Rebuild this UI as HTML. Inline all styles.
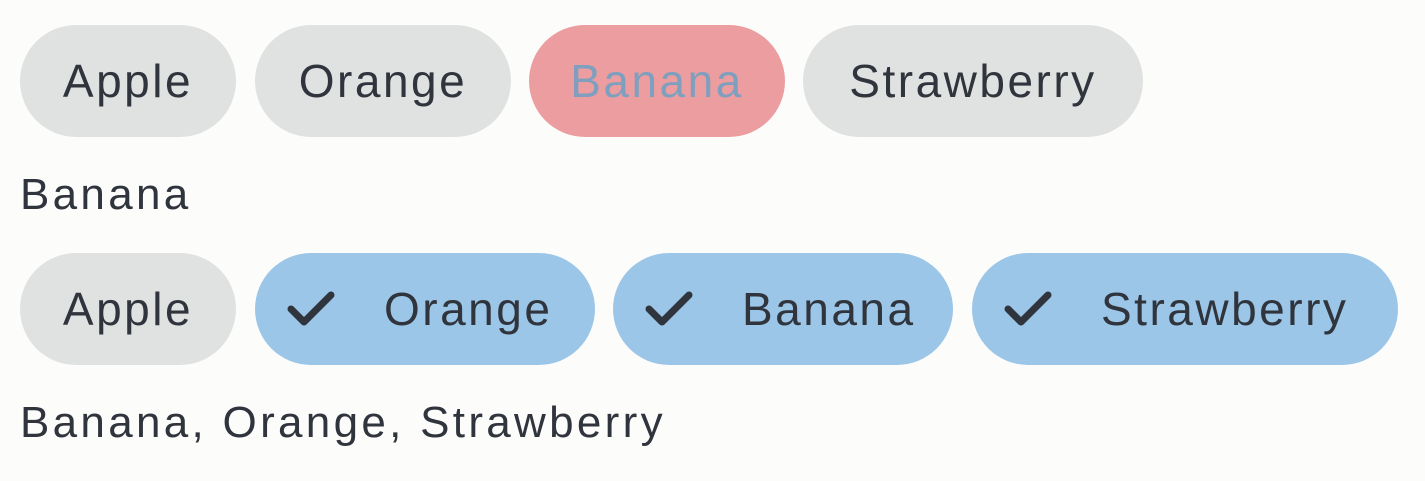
<!DOCTYPE html>
<html><head><style>
html,body{margin:0;padding:0;background:#fcfcfb;width:1425px;height:481px;overflow:hidden;font-family:"Liberation Sans",sans-serif;color:#30343c}
.c{position:absolute;height:112px;border-radius:56px;background:#e0e1e1;display:flex;align-items:center;justify-content:center;font-size:46px;box-sizing:border-box;letter-spacing:2.5px}
.b{background:#9bc6e8;justify-content:flex-start}
.b svg{margin-left:32px;margin-right:49px}
.l{position:absolute;font-size:44px;left:20px;letter-spacing:3.3px}
</style></head><body>
<div class="c" style="left:20px;top:25px;width:216px">Apple</div>
<div class="c" style="left:255px;top:25px;width:256px">Orange</div>
<div class="c" style="left:529px;top:25px;width:256px;background:#ec9d9f;color:#7f9fbf">Banana</div>
<div class="c" style="left:803px;top:25px;width:340px">Strawberry</div>
<div class="l" style="top:170px">Banana</div>
<div class="c" style="left:20px;top:253px;width:216px">Apple</div>
<div class="c b" style="left:255px;top:253px;width:340px"><svg width="48" height="36" viewBox="0 0 48 36"><path d="M4 18 L17 31 L44 4" fill="none" stroke="#30343c" stroke-width="7" stroke-linecap="round" stroke-linejoin="round"/></svg>Orange</div>
<div class="c b" style="left:613px;top:253px;width:340px"><svg width="48" height="36" viewBox="0 0 48 36"><path d="M4 18 L17 31 L44 4" fill="none" stroke="#30343c" stroke-width="7" stroke-linecap="round" stroke-linejoin="round"/></svg>Banana</div>
<div class="c b" style="left:972px;top:253px;width:426px"><svg width="48" height="36" viewBox="0 0 48 36"><path d="M4 18 L17 31 L44 4" fill="none" stroke="#30343c" stroke-width="7" stroke-linecap="round" stroke-linejoin="round"/></svg>Strawberry</div>
<div class="l" style="top:398px">Banana, Orange, Strawberry</div>
</body></html>
